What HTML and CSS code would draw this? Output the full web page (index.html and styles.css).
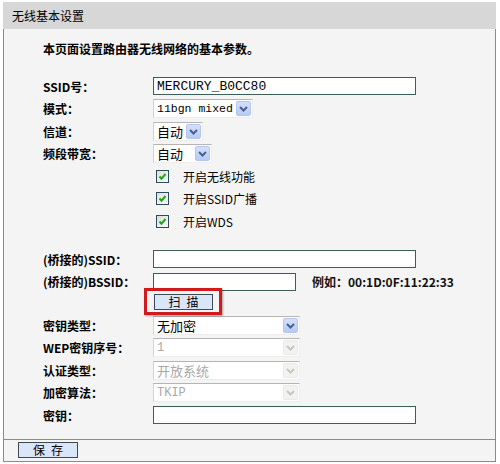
FILE: index.html
```html
<!DOCTYPE html>
<html lang="zh-CN">
<head>
<meta charset="UTF-8" />
<title>无线基本设置</title>
<link rel="stylesheet" href="styles.css">
</head>
<body>
<div class="panel">
  <div class="panel-head">无线基本设置</div>
  <div class="panel-body">
    <p class="intro">本页面设置路由器无线网络的基本参数。</p>

    <div class="row"><label>SSID号：</label><input class="text long" value="MERCURY_B0CC80" /></div>
    <div class="row"><label>模式：</label>
      <div class="select s-mode"><span>11bgn mixed</span><span class="arrow"><svg width="15" height="15" viewBox="0 0 15 15"><path d="M4 6l3.5 3.5L11 6" /></svg></span></div>
    </div>
    <div class="row"><label>信道：</label>
      <div class="select s-chan"><span class="cjk">自动</span><span class="arrow"><svg width="15" height="15" viewBox="0 0 15 15"><path d="M4 6l3.5 3.5L11 6" /></svg></span></div>
    </div>
    <div class="row"><label>频段带宽：</label>
      <div class="select s-band"><span class="cjk">自动</span><span class="arrow"><svg width="15" height="15" viewBox="0 0 15 15"><path d="M4 6l3.5 3.5L11 6" /></svg></span></div>
    </div>
    <div class="row"><label></label><span class="check"><svg width="11" height="11" viewBox="0 0 11 11"><path d="M2.5 5.5l2 2.2L8.5 3" /></svg></span>开启无线功能</div>
    <div class="row"><label></label><span class="check"><svg width="11" height="11" viewBox="0 0 11 11"><path d="M2.5 5.5l2 2.2L8.5 3" /></svg></span>开启SSID广播</div>
    <div class="row"><label></label><span class="check"><svg width="11" height="11" viewBox="0 0 11 11"><path d="M2.5 5.5l2 2.2L8.5 3" /></svg></span>开启WDS</div>

    <div class="spacer"></div>

    <div class="row"><label>(桥接的)SSID：</label><input class="text long" value="" /></div>
    <div class="row"><label>(桥接的)BSSID：</label><input class="text short" value="" /><span class="hint">例如：00:1D:0F:11:22:33</span></div>
    <div class="row scan-row"><label></label><span class="marked"><button class="btn scan">扫&ensp;描</button></span></div>

    <div class="row"><label>密钥类型：</label>
      <div class="select s-wide"><span class="cjk">无加密</span><span class="arrow"><svg width="15" height="15" viewBox="0 0 15 15"><path d="M4 6l3.5 3.5L11 6" /></svg></span></div>
    </div>
    <div class="row"><label>WEP密钥序号：</label>
      <div class="select s-wide off"><span>1</span><span class="arrow"><svg width="15" height="15" viewBox="0 0 15 15"><path d="M4 6l3.5 3.5L11 6" /></svg></span></div>
    </div>
    <div class="row"><label>认证类型：</label>
      <div class="select s-wide off"><span class="cjk">开放系统</span><span class="arrow"><svg width="15" height="15" viewBox="0 0 15 15"><path d="M4 6l3.5 3.5L11 6" /></svg></span></div>
    </div>
    <div class="row"><label>加密算法：</label>
      <div class="select s-wide off"><span>TKIP</span><span class="arrow"><svg width="15" height="15" viewBox="0 0 15 15"><path d="M4 6l3.5 3.5L11 6" /></svg></span></div>
    </div>
    <div class="row"><label>密钥：</label><input class="text long" value="" /></div>
  </div>
  <div class="panel-foot"><button class="btn save">保&ensp;存</button></div>
</div>
</body>
</html>
```

FILE: styles.css
```css
body{margin:0;background:#fff;color:#000;font:12px "Noto Sans CJK SC",sans-serif;}
.panel{width:493px;margin:2px 0 0 3px;}
.panel-head{height:27px;line-height:27px;padding-left:9px;background:#d7d7d7;}
.panel-body{background:#f4f4f4;border:1px solid #c47272;border-top:0;padding:10px 0 12.75px 39px;}
.panel-foot{height:21px;background:#f4f4f4;border:1px solid #c47272;border-top:0;padding-left:14px;}

.intro{margin:0 0 16px;line-height:20px;font-weight:bold;}
.row{display:flex;align-items:center;height:22.5px;white-space:nowrap;}
.row label{width:110px;flex:none;font-weight:bold;}
.spacer{height:15.25px;}
.scan-row{height:21px;align-items:flex-start;}

.text{box-sizing:border-box;height:18px;margin:0;padding:0 3px;border:1px solid #3d5c5c;background:#fff;font:13px "Liberation Mono",monospace;color:#000;}
.long{width:263px;}
.short{width:143px;}
.hint{margin-left:16px;font-weight:bold;color:#111;}

.select{box-sizing:border-box;display:flex;align-items:center;justify-content:space-between;height:19px;padding-left:3px;background:#fff;border:1px solid;border-color:#b5b5b5 #ededed #ededed #d2d2d2;font:12px "Liberation Mono","Noto Sans CJK SC",monospace;}
.select .cjk{font-family:"Noto Sans CJK SC",sans-serif;font-size:13px;}
.s-mode{width:100px;font-size:11.5px;}
.s-chan{width:50px;}
.s-band{width:59px;}
.s-wide{width:147px;}
.arrow{box-sizing:border-box;flex:none;width:15px;height:15px;margin-right:1px;border:1px solid #b3c6ee;border-radius:2px;background:linear-gradient(#d3e0fb,#b6caf4);}
.arrow svg{display:block;margin:-1px;}
.arrow path{fill:none;stroke:#4b5f8c;stroke-width:2;}
.off{color:#a8a8a8;}
.off .arrow{border-color:#ebebe6;background:#f2f2ee;}
.off .arrow path{stroke:#c6c6c6;}

.check{box-sizing:border-box;width:13px;height:13px;margin:0 14px 0 3px;border:1px solid #2d4b5c;background:linear-gradient(135deg,#deded8,#fbfbfb);}
.check svg{display:block;}
.check path{fill:none;stroke:#22a322;stroke-width:2;}

.btn{box-sizing:border-box;height:16px;margin:0;padding:0;border:1px solid #3d4a5a;background:#d8e6f7;font:12px/14px "Noto Sans CJK SC",sans-serif;color:#000;}
.scan{width:59px;margin-left:1px;}
.save{width:60px;margin-top:2px;}

/* red call-out frame around the scan button */
.marked{position:relative;display:inline-block;height:16px;}
.marked::after{content:"";position:absolute;top:-5px;right:-9px;bottom:-6px;left:-9px;border:3px solid #d11a1d;box-shadow:1px 1px 2px rgba(0,0,0,.35);}
```
